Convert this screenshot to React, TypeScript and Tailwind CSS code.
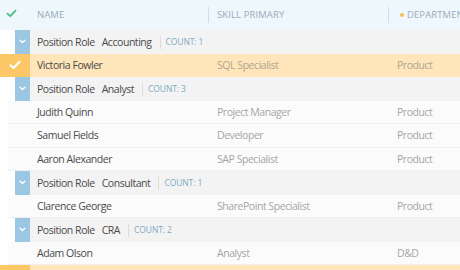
import React from "react";

type Person = { name: string; skill: string; dept: string; selected?: boolean };
type Group = { role: string; count: number; people: Person[] };

const groups: Group[] = [
  { role: "Accounting", count: 1, people: [{ name: "Victoria Fowler", skill: "SQL Specialist", dept: "Product", selected: true }] },
  {
    role: "Analyst",
    count: 3,
    people: [
      { name: "Judith Quinn", skill: "Project Manager", dept: "Product" },
      { name: "Samuel Fields", skill: "Developer", dept: "Product" },
      { name: "Aaron Alexander", skill: "SAP Specialist", dept: "Product" },
    ],
  },
  { role: "Consultant", count: 1, people: [{ name: "Clarence George", skill: "SharePoint Specialist", dept: "Product" }] },
  { role: "CRA", count: 2, people: [{ name: "Adam Olson", skill: "Analyst", dept: "D&D" }] },
];

const Check = ({ className }: { className?: string }) => (
  <svg viewBox="0 0 12 10" className={className} fill="none" stroke="currentColor" strokeWidth="2" strokeLinecap="round" strokeLinejoin="round">
    <path d="M1.5 5.2 L4.6 8 L10.5 1.8" />
  </svg>
);

const Chevron = () => (
  <svg viewBox="0 0 8 6" className="w-[7px] h-[5px] text-white" fill="none" stroke="currentColor" strokeWidth="1.6" strokeLinecap="round" strokeLinejoin="round">
    <path d="M1.2 1.4 L4 4.2 L6.8 1.4" />
  </svg>
);

const GroupRow = ({ g }: { g: Group }) => (
  <div className="flex h-[23.5px] items-stretch">
    <div className="w-[15px] shrink-0 bg-white" />
    <div className="w-[15px] shrink-0 bg-[#9cc7e2] flex items-center justify-center">
      <Chevron />
    </div>
    <div className="flex-1 bg-[#f3f3f3] flex items-center pl-[7px] pt-[2px] text-[10.5px] tracking-[-0.45px] text-[#4a4a4a] whitespace-nowrap">
      <span>Position Role</span>
      <span className="ml-[7px]">{g.role}</span>
      <span className="ml-[8px] h-[13px] w-px bg-[#dcdcdc]" />
      <span className="ml-[5px] text-[8.5px] tracking-[-0.1px] text-[#7fa9c4]">COUNT: {g.count}</span>
    </div>
  </div>
);

const PersonRow = ({ p }: { p: Person }) =>
  p.selected ? (
    <div className="flex h-[23.5px] items-stretch">
      <div className="w-[30px] shrink-0 bg-[#fcc766] flex items-center justify-center">
        <Check className="w-[12px] h-[10px] text-white" />
      </div>
      <div className="flex-1 bg-[#fee6ba] flex items-center pt-[2px] text-[10.5px] tracking-[-0.45px] whitespace-nowrap">
        <span className="w-[187px] shrink-0 pl-[7px] text-[#4a4a4a]">{p.name}</span>
        <span className="w-[180px] shrink-0 text-[#b0a58f]">{p.skill}</span>
        <span className="text-[#b0a58f]">{p.dept}</span>
      </div>
    </div>
  ) : (
    <div className="flex h-[23.5px] items-stretch bg-white">
      <div className="w-[8px] shrink-0 bg-white" />
      <div className="flex-1 flex items-center pt-[2px] bg-[#fbfbfb] border-b border-[#efefef] text-[10.5px] tracking-[-0.45px] whitespace-nowrap">
        <span className="w-[29px] shrink-0" />
        <span className="w-[180px] shrink-0 text-[#4a4a4a]">{p.name}</span>
        <span className="w-[180px] shrink-0 text-[#a6a6a6]">{p.skill}</span>
        <span className="text-[#a6a6a6]">{p.dept}</span>
      </div>
    </div>
  );

export default function App() {
  return (
    <div className="w-[460px] h-[270px] overflow-hidden bg-white font-['Open_Sans',sans-serif]">
      <div className="flex h-[30px] items-center bg-[#eef7fc] text-[9.5px] tracking-[0.1px] text-[#9aabba] whitespace-nowrap">
        <div className="w-[30px] shrink-0 flex pl-[6px] pb-[3px]">
          <Check className="w-[11px] h-[9px] text-[#47bd8a]" />
        </div>
        <div className="w-[178px] shrink-0 pl-[7px]">NAME</div>
        <div className="w-px shrink-0 h-[16px] bg-[#c6e0f1]" />
        <div className="w-[179px] shrink-0 pl-[8px]">SKILL PRIMARY</div>
        <div className="w-px shrink-0 h-[16px] bg-[#c6e0f1]" />
        <div className="flex items-center pl-[11px]">
          <span className="w-[4px] h-[4px] rounded-full bg-[#f8c04f] mr-[3px]" />
          DEPARTMENT
        </div>
      </div>
      {groups.map((g) => (
        <div key={g.role}>
          <GroupRow g={g} />
          {g.people.map((p) => (
            <PersonRow key={p.name} p={p} />
          ))}
        </div>
      ))}
      <div className="flex h-[23.5px]">
        <div className="w-[30px] bg-[#fcc766]" />
        <div className="flex-1 bg-[#fee6ba]" />
      </div>
    </div>
  );
}
